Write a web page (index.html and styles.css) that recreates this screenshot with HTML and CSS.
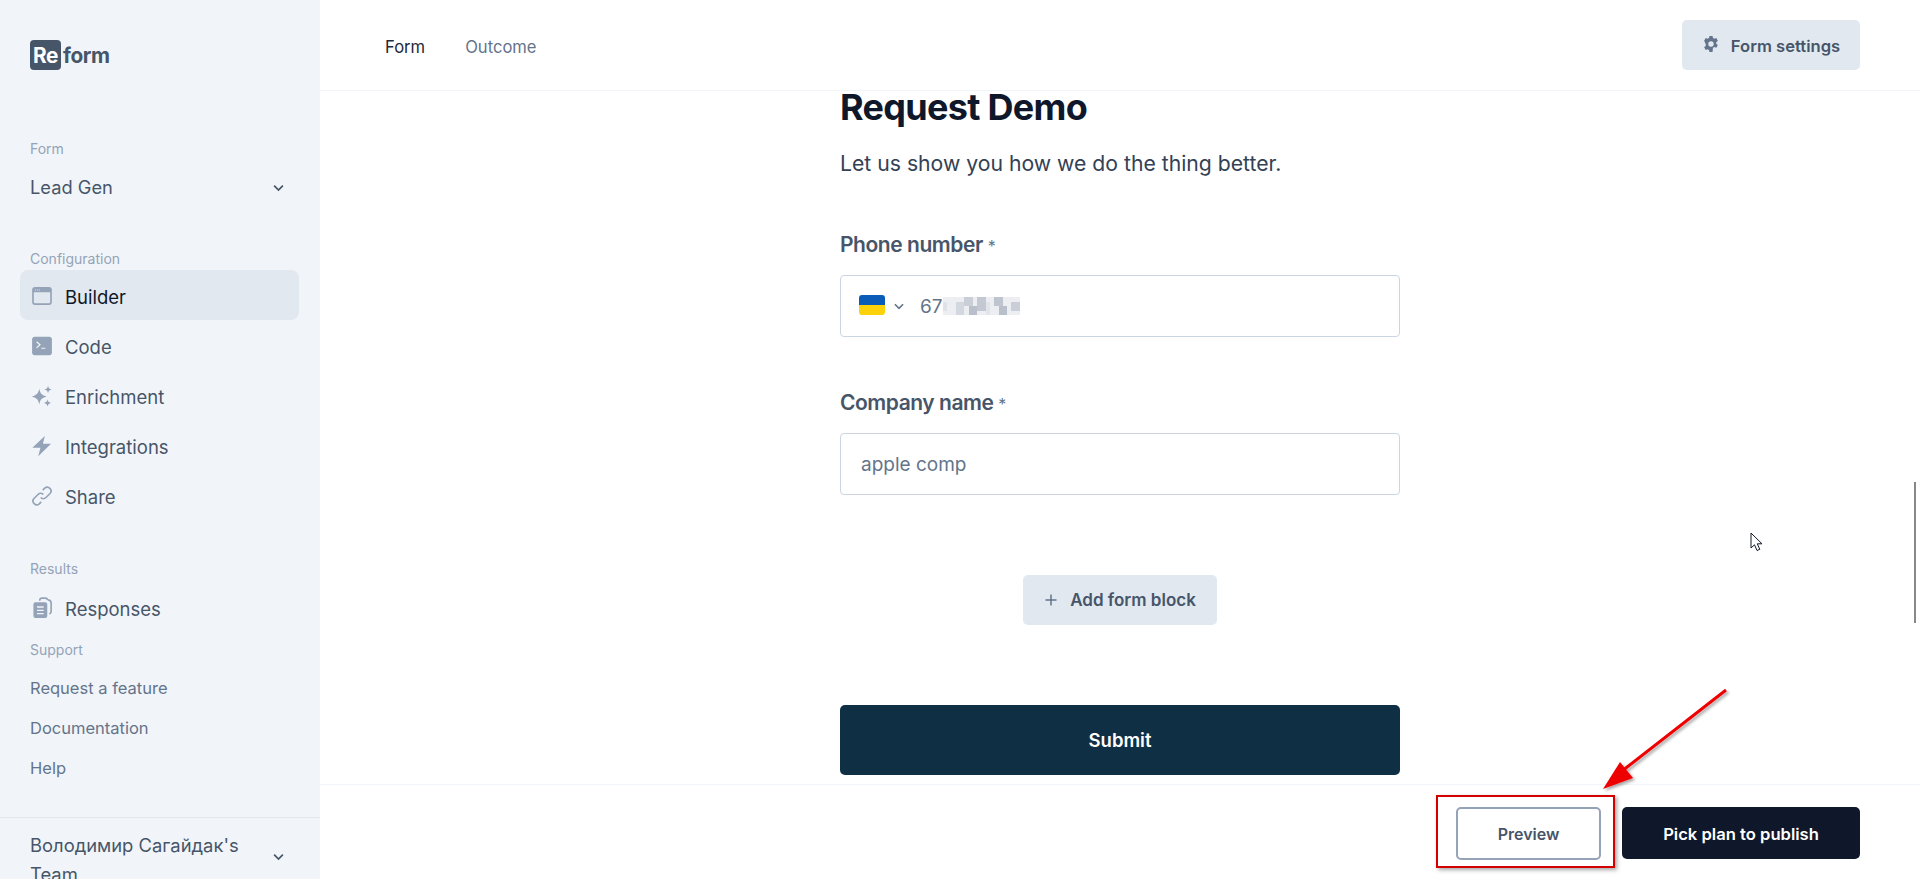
FILE: index.html
```html
<!DOCTYPE html>
<html lang="en">
<head>
    <meta charset="UTF-8">
    <title>Reform</title>
    <link rel="stylesheet" href="styles.css">
</head>
<body>
    <aside class="sidebar">
        <div class="logo"><span class="logo-box">Re</span><span class="logo-text">form</span></div>

        <p class="side-label label-form">Form</p>
        <div class="picker">
            <span>Lead Gen</span>
            <svg class="chev" viewBox="0 0 12 12"><path d="M2.5 4.5 6 8l3.5-3.5"/></svg>
        </div>

        <p class="side-label label-config">Configuration</p>
        <nav class="nav">
            <a class="nav-item active">
                <svg class="nav-icon" viewBox="0 0 20 20"><rect x="1.8" y="2.6" width="16.4" height="14.8" rx="2" class="ico-line"/><path d="M1.8 6.6v-2a2 2 0 0 1 2-2h12.400a2 2 0 0 1 2 2v2z" class="ico-fill"/><path d="M3.800 4.200h.8v.8h-.8zm1.800 0h.8v.8h-.8zm1.800 0h.8v.8h-.8z" fill="#e2e8f0"/></svg>
                Builder
            </a>
            <a class="nav-item">
                <svg class="nav-icon" viewBox="0 0 20 20"><path fill-rule="evenodd" class="ico-fill" d="M3.500 1.500h13a2.500 2.500 0 0 1 2.500 2.500v12a2.500 2.500 0 0 1-2.500 2.500h-13A2.500 2.500 0 0 1 1 16V4a2.500 2.500 0 0 1 2.500-2.500zm1.200 5 2.600 2.400-2.600 2.400.8.800 3.500-3.200-3.500-3.200zm4.800 5v1.100h3.500v-1.100z"/></svg>
                Code
            </a>
            <a class="nav-item">
                <svg class="nav-icon" viewBox="0 0 20 20"><path class="ico-fill" d="M7.500 3.200C8.300 7.500 9.500 9 14.200 10.500 9.500 12 8.300 13.500 7.500 17.800 6.700 13.500 5.500 12 .8 10.500 5.500 9 6.700 7.500 7.500 3.200zM15.500.6c.4 2 1 2.700 3.400 3.400-2.400.7-3 1.400-3.400 3.400-.4-2-1-2.700-3.400-3.400 2.400-.7 3-1.400 3.400-3.400zM15 13c.4 2 1 2.700 3.200 3.300-2.200.6-2.800 1.300-3.200 3.300-.4-2-1-2.700-3.200-3.300 2.200-.6 2.800-1.300 3.200-3.300z"/></svg>
                Enrichment
            </a>
            <a class="nav-item">
                <svg class="nav-icon" viewBox="0 0 20 20"><path class="ico-fill" d="M12.600.8 10.800 8h7.400L6.600 19.400 8.600 11.600H1.200z"/></svg>
                Integrations
            </a>
            <a class="nav-item">
                <svg class="nav-icon" viewBox="0 0 20 20"><path class="ico-line" d="M8.800 11.400a3.400 3.400 0 0 0 4.800 0l3.700-3.700a3.400 3.400 0 0 0-4.800-4.800L10.700 4.700M11.200 8.600a3.400 3.400 0 0 0-4.800 0l-3.700 3.700a3.400 3.400 0 0 0 4.800 4.800l1.800-1.800"/></svg>
                Share
            </a>
        </nav>

        <p class="side-label label-results">Results</p>
        <a class="nav-item">
            <svg class="nav-icon" viewBox="0 0 20 20"><path class="ico-line" d="M8 3.400V3a2 2 0 0 1 2-2h3a2 2 0 0 1 2 2M15.500 2.600a3 3 0 0 1 2.800 3v7.600a2.400 2.400 0 0 1-1.600 2.200"/><path fill-rule="evenodd" class="ico-fill" d="M4 4.800h9a1.800 1.800 0 0 1 1.800 1.800v10.600a1.800 1.800 0 0 1-1.800 1.800H4a1.800 1.800 0 0 1-1.800-1.800V6.600A1.800 1.800 0 0 1 4 4.800zM5.500 8.500v1.200h6V8.500zm0 3v1.200h6v-1.200zm0 3v1.200h6v-1.200z"/></svg>
            Responses
        </a>

        <p class="side-label label-support">Support</p>
        <a class="help-link">Request a feature</a>
        <a class="help-link">Documentation</a>
        <a class="help-link">Help</a>

        <div class="team">
            <span>Володимир Сагайдак's Team</span>
            <svg class="chev" viewBox="0 0 12 12"><path d="M2.500 4.500 6 8l3.500-3.500"/></svg>
        </div>
    </aside>

    <main class="main">
        <header class="topbar">
            <div class="tabs">
                <a class="tab tab-on">Form</a>
                <a class="tab">Outcome</a>
            </div>
            <button class="btn-soft btn-settings">
                <svg class="gear" viewBox="0 0 20 20"><path fill-rule="evenodd" d="M8.300 1h3.400l.5 2.400c.5.200 1 .4 1.400.8l2.300-.8 1.700 3-1.800 1.600a6 6 0 0 1 0 1.600l1.800 1.600-1.700 3-2.300-.8c-.4.400-.9.600-1.400.8L11.700 19H8.300l-.5-2.400c-.5-.2-1-.4-1.400-.8l-2.300.8-1.700-3 1.800-1.600a6 6 0 0 1 0-1.600L2.400 6.400l1.700-3 2.300.8c.4-.4.900-.6 1.400-.8zM10 7a3 3 0 1 0 0 6 3 3 0 0 0 0-6z"/></svg>
                Form settings
            </button>
        </header>

        <section class="canvas">
            <div class="form-col">
                <h1 class="form-title">Request Demo</h1>
                <p class="form-sub">Let us show you how we do the thing better.</p>

                <label class="field-label label-phone">Phone number <span class="req">*</span></label>
                <div class="field">
                    <svg class="flag" viewBox="0 0 26 20"><path d="M3 0h20a3 3 0 0 1 3 3v7H0V3a3 3 0 0 1 3-3z" fill="#0a5cb8"/><path d="M0 10h26v7a3 3 0 0 1-3 3H3a3 3 0 0 1-3-3z" fill="#fdd20a"/></svg>
                    <svg class="chev chev-small" viewBox="0 0 12 12"><path d="M2.500 4.500 6 8l3.500-3.500"/></svg>
                    <span class="phone-val">67</span>
                    <svg class="smudge" viewBox="0 0 18 4" preserveAspectRatio="none" shape-rendering="crispEdges">
                        <rect x="0" y="0" width="18" height="4" fill="#eceef2"/>
                        <rect x="0" y="1" width="1" height="2" fill="#dfe2e8"/>
                        <rect x="3" y="1" width="2" height="3" fill="#d3d7df"/>
                        <rect x="5" y="0" width="2" height="2" fill="#c9ced7"/>
                        <rect x="6" y="2" width="2" height="2" fill="#b9bfcb"/>
                        <rect x="8" y="0" width="2" height="3" fill="#c3c8d2"/>
                        <rect x="10" y="1" width="1" height="3" fill="#e1e4e9"/>
                        <rect x="12" y="0" width="2" height="2" fill="#bfc5cf"/>
                        <rect x="13" y="2" width="2" height="2" fill="#b9bfcb"/>
                        <rect x="16" y="1" width="2" height="2" fill="#c9ced7"/>
                    </svg>
                </div>

                <label class="field-label label-company">Company name <span class="req">*</span></label>
                <div class="field field-text">apple comp</div>

                <div class="add-row">
                    <button class="btn-soft btn-add">
                        <svg class="plus" viewBox="0 0 14 14"><path d="M7 1.500v11M1.500 7h11"/></svg>
                        Add form block
                    </button>
                </div>

                <button class="btn-submit">Submit</button>
            </div>
        </section>

        <footer class="bottombar">
            <button class="btn-preview">Preview</button>
            <button class="btn-publish">Pick plan to publish</button>
        </footer>
    </main>

    <div class="scroll-thumb"></div>
    <svg class="cursor" viewBox="0 0 13 20"><path d="M1 1v15l3.500-3.200 2.500 5.700 2.800-1.200-2.500-5.500H12z" fill="#fff" stroke="#111827" stroke-width="1"/></svg>

    <div class="mark-box"></div>
    <svg class="mark-arrow" viewBox="0 0 140 110">
        <defs>
            <filter id="arrow-shadow" x="-10%" y="-10%" width="130%" height="130%">
                <feDropShadow dx="2" dy="2" stdDeviation="1.500" flood-color="#000" flood-opacity=".35"/>
            </filter>
        </defs>
        <g filter="url(#arrow-shadow)">
            <path d="M129 4 25 85" stroke="#ee0000" stroke-width="3" fill="none"/>
            <path d="M6 103 23 76 36 92z" fill="#ee0000"/>
        </g>
    </svg>
</body>
</html>
```

FILE: styles.css
```css
* {
    box-sizing: border-box;
}

html, body {
    margin: 0;
    height: 100%;
    overflow: hidden;
}

body {
    display: flex;
    font-family: Inter, "Noto Sans", sans-serif;
    color: #0f172a;
    background: #fff;
}

button {
    font-family: inherit;
    border: none;
    cursor: pointer;
}

/* sidebar */
.sidebar {
    width: 320px;
    height: 879px;
    flex-shrink: 0;
    background: #f1f5f9;
    padding-top: 40px;
    overflow: hidden;
}

.logo {
    display: flex;
    align-items: center;
    height: 30px;
    margin-left: 30px;
    font-size: 20.8px;
    font-weight: 700;
    letter-spacing: -0.4px;
}

.logo-box {
    display: flex;
    align-items: center;
    justify-content: center;
    width: 31px;
    height: 30px;
    border-radius: 4px;
    background: #475569;
    color: #fff;
}

.logo-text {
    margin-left: 2px;
    color: #475569;
}

.side-label {
    margin: 0 0 0 30px;
    font-size: 14px;
    line-height: 20px;
    color: #94a3b8;
}

.label-form {
    margin-top: 69px;
}

.label-config {
    margin-top: 48px;
    margin-bottom: 1px;
}

.label-results {
    margin-top: 39px;
    margin-bottom: 3px;
}

.label-support {
    margin-top: 8px;
    margin-bottom: 9px;
}

.picker {
    display: flex;
    align-items: center;
    justify-content: space-between;
    height: 28px;
    margin: 14px 34px 0 30px;
    font-size: 18.3px;
    color: #475569;
}

.chev {
    width: 15px;
    height: 15px;
    fill: none;
    stroke: #475569;
    stroke-width: 1.4;
}

.nav-item {
    display: flex;
    align-items: center;
    gap: 12px;
    width: 279px;
    height: 50px;
    margin-left: 20px;
    padding: 4px 0 0 11px;
    border-radius: 8px;
    font-size: 18.5px;
    color: #475569;
}

.nav-item.active {
    background: #e2e8f0;
    color: #0f172a;
}

.nav-icon {
    width: 22px;
    height: 22px;
    flex-shrink: 0;
    margin-top: -3px;
}

.ico-fill {
    fill: #94a3b8;
}

.ico-line {
    fill: none;
    stroke: #94a3b8;
    stroke-width: 1.5;
}

.help-link {
    display: block;
    height: 40px;
    margin-left: 30px;
    font-size: 16.5px;
    line-height: 39px;
    color: #64748b;
}

.team {
    display: flex;
    align-items: center;
    justify-content: space-between;
    margin-top: 28px;
    padding: 13px 34px 0 30px;
    border-top: 1px solid #e2e8f0;
    font-size: 18.4px;
    line-height: 29px;
    color: #475569;
}

.team span {
    width: 220px;
}

.team .chev {
    margin-top: -7px;
}

/* top bar */
.main {
    flex: 1;
    display: flex;
    flex-direction: column;
    height: 879px;
    min-width: 0;
}

.topbar {
    display: flex;
    align-items: flex-start;
    justify-content: space-between;
    height: 91px;
    flex-shrink: 0;
    padding: 20px 60px 0 65px;
    border-bottom: 1px solid #f1f5f9;
}

.tabs {
    display: flex;
    gap: 40px;
    padding-top: 15px;
}

.tab {
    font-size: 16.6px;
    line-height: 24px;
    color: #64748b;
}

.tab-on {
    color: #1e293b;
}

.btn-soft {
    display: flex;
    align-items: center;
    justify-content: center;
    height: 50px;
    border-radius: 5px;
    background: #e2e8f0;
    font-size: 17px;
    font-weight: 600;
    color: #475569;
}

.btn-settings {
    width: 178px;
    gap: 11px;
    padding-top: 3px;
    font-size: 16.6px;
}

.gear {
    width: 18px;
    height: 18px;
    margin-top: -4px;
    fill: #64748b;
}

/* form */
.canvas {
    flex: 1;
    padding-left: 520px;
}

.form-col {
    width: 560px;
}

.form-title {
    margin: 0;
    font-size: 36px;
    line-height: 32px;
    font-weight: 700;
    letter-spacing: -0.7px;
    color: #0f172a;
}

.form-sub {
    margin: 24px 0 0;
    font-size: 21.2px;
    line-height: 32px;
    color: #334155;
}

.field-label {
    display: block;
    font-size: 21px;
    line-height: 28px;
    font-weight: 600;
    letter-spacing: -0.45px;
    color: #475569;
}

.label-phone {
    margin-top: 52px;
}

.label-company {
    margin-top: 52px;
}

.req {
    font-size: 16px;
    font-weight: 400;
    color: #64748b;
}

.field {
    display: flex;
    align-items: center;
    height: 62px;
    margin-top: 15px;
    padding-left: 18px;
    border: 1px solid #cbd5e1;
    border-radius: 4px;
    font-size: 19px;
    color: #64748b;
}

.field-text {
    padding-left: 20px;
}

.flag {
    width: 26px;
    height: 20px;
    margin-top: -2px;
}

.chev-small {
    width: 14px;
    height: 14px;
    margin-left: 7px;
    stroke: #64748b;
}

.phone-val {
    margin-left: 14px;
}

.smudge {
    width: 77px;
    height: 18px;
}

.add-row {
    display: flex;
    justify-content: center;
    margin-top: 80px;
}

.btn-add {
    width: 194px;
    gap: 12px;
}

.plus {
    width: 14px;
    height: 14px;
    fill: none;
    stroke: #64748b;
    stroke-width: 1.5;
}

.btn-submit {
    display: block;
    width: 100%;
    height: 70px;
    margin-top: 80px;
    border-radius: 5px;
    background: #0f2f44;
    font-size: 18.5px;
    font-weight: 600;
    color: #fff;
}

/* bottom bar */
.bottombar {
    display: flex;
    justify-content: flex-end;
    gap: 21px;
    height: 95px;
    flex-shrink: 0;
    padding: 22px 60px 0 0;
    border-top: 1px solid #f1f5f9;
    background: #fff;
}

.btn-preview {
    width: 145px;
    height: 53px;
    border: 2px solid #94a3b8;
    border-radius: 5px;
    background: #fff;
    padding-top: 2px;
    font-size: 16px;
    font-weight: 600;
    color: #475569;
}

.btn-publish {
    width: 238px;
    height: 52px;
    padding-top: 2px;
    border-radius: 5px;
    background: #0f172a;
    font-size: 16.6px;
    font-weight: 600;
    color: #fff;
}

/* things over the page */
.scroll-thumb {
    position: absolute;
    left: 1914px;
    top: 482px;
    width: 2px;
    height: 141px;
    background: #888;
}

.cursor {
    position: absolute;
    left: 1750px;
    top: 532px;
    width: 13px;
    height: 20px;
}

.mark-box {
    position: absolute;
    left: 1436px;
    top: 795px;
    width: 179px;
    height: 73px;
    border: 2px solid #d40000;
    box-shadow: 2px 2px 4px rgba(0, 0, 0, 0.35);
}

.mark-arrow {
    position: absolute;
    left: 1597px;
    top: 686px;
    width: 140px;
    height: 110px;
}
```
